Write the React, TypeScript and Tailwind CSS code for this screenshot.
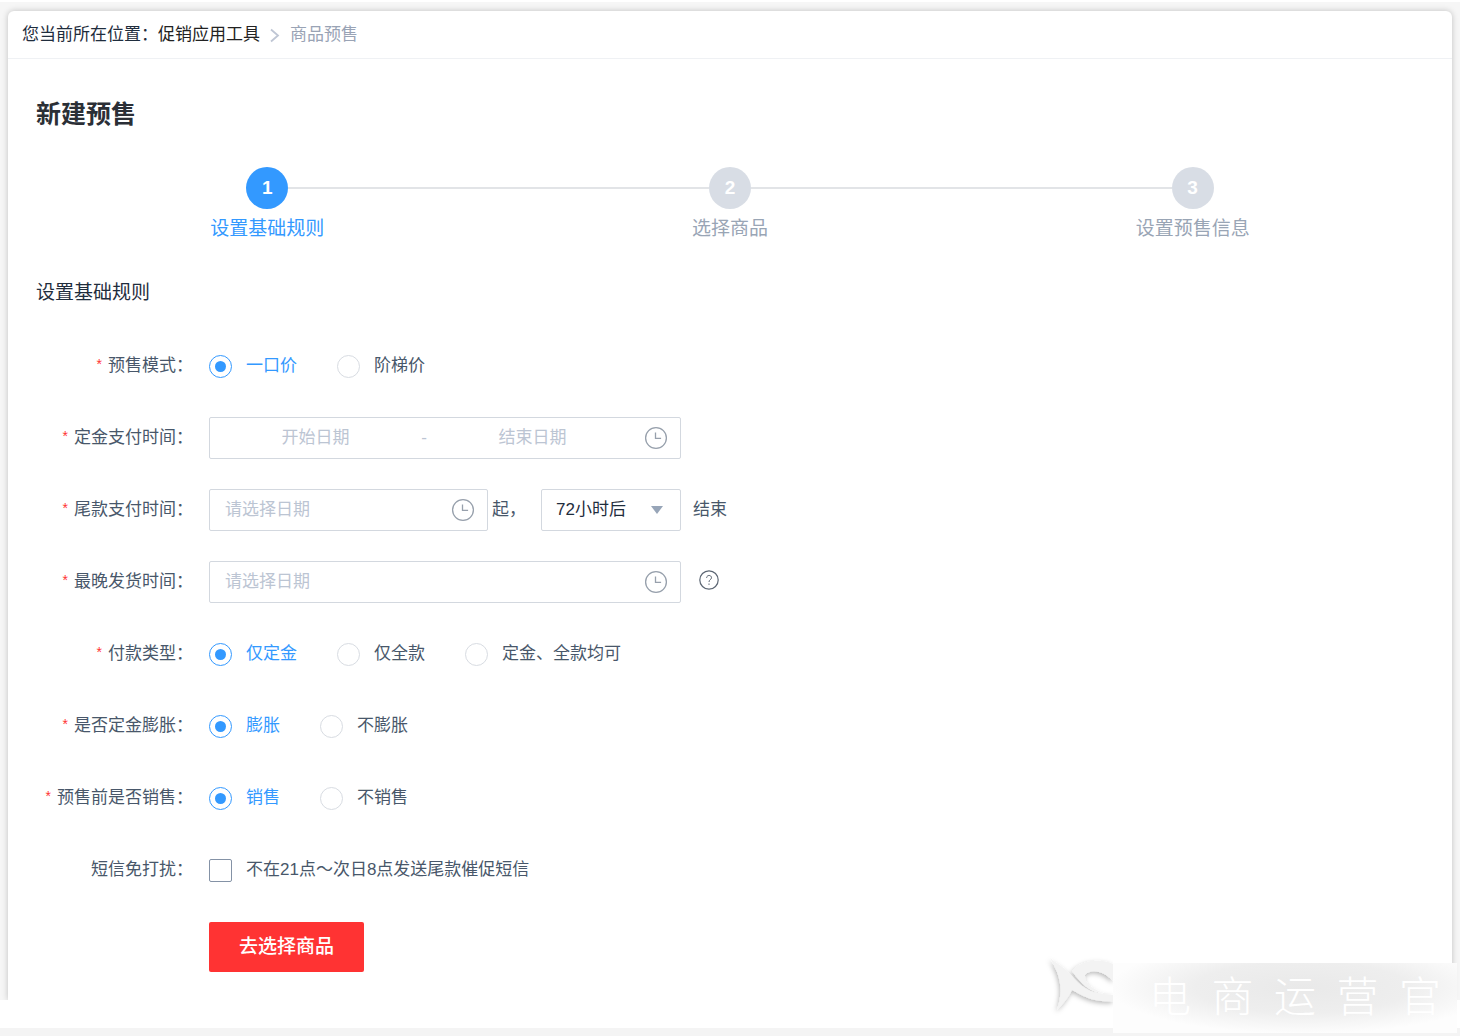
import type { ReactNode } from "react"

interface FormRowProps {
  label: string;
  required?: boolean;
  htmlFor?: string;
  children: ReactNode;
}

const FormRow = ({ label, required = true, htmlFor, children }: FormRowProps) => (
  <div className="flex min-h-[42px] items-center gap-4">
    <label htmlFor={htmlFor} className="flex w-[157px] shrink-0 items-start justify-end gap-1.5">
      {required && <span className="text-sm leading-5 text-[#ff3333]">*</span>}
      <span className="whitespace-nowrap">{label}：</span>
    </label>
    {children}
  </div>
)

interface RadioGroupProps {
  name: string;
  label: string;
  options: string[];
}

const RadioGroup = ({ name, label, options }: RadioGroupProps) => (
  <div role="radiogroup" aria-label={label} className="flex flex-wrap gap-10">
    {options.map((option, i) => (
      <label key={option} className="flex cursor-pointer items-center gap-3.5">
        <input
          type="radio"
          name={name}
          defaultChecked={i === 0}
          className="peer grid size-[23px] appearance-none place-content-center rounded-full border border-[#d8dce2] bg-white before:size-[11px] before:rounded-full checked:border-[#3399ff] checked:before:bg-[#3399ff]"
        />
        <span className="peer-checked:text-[#3399ff]">{option}</span>
      </label>
    ))}
  </div>
)

const ClockIcon = () => (
  <svg viewBox="0 0 24 24" className="size-6 shrink-0" fill="none" stroke="#97a0ac" strokeWidth="1.3">
    <circle cx="12" cy="12" r="10.4" />
    <path d="M11.5 6.5v5.8h5.6" />
  </svg>
)

interface DateFieldProps {
  id: string;
  className: string;
}

const DateField = ({ id, className }: DateFieldProps) => (
  <div className={`flex h-[42px] items-center rounded-xs border border-[#d3d8df] bg-white pr-3 pl-[15px] ${className}`}>
    <input
      id={id}
      type="text"
      placeholder="请选择日期"
      className="w-full min-w-0 flex-1 outline-none placeholder:text-[#bcc5d3]"
    />
    <ClockIcon />
  </div>
)

const steps = ["设置基础规则", "选择商品", "设置预售信息"]

const Steps = () => (
  <ol className="mt-[35px] grid grid-cols-3 text-[19px]">
    {steps.map((step, i) => (
      <li key={step} className="flex flex-col items-center">
        <div className="flex w-full items-center">
          <span className={`h-0.5 flex-1 ${i > 0 ? "bg-[#e2e4e7]" : ""}`} />
          <span
            className={`flex size-[42px] items-center justify-center rounded-full font-bold text-white ${i === 0 ? "bg-[#3399ff]" : "bg-[#d8dde5]"}`}
          >
            {i + 1}
          </span>
          <span className={`h-0.5 flex-1 ${i < steps.length - 1 ? "bg-[#e2e4e7]" : ""}`} />
        </div>
        <span className={`mt-1.5 leading-7 ${i === 0 ? "text-[#3399ff]" : "text-[#99a5b5]"}`}>{step}</span>
      </li>
    ))}
  </ol>
)

const Watermark = () => (
  <div className="pointer-events-none absolute right-[3px] bottom-[3px] flex items-end">
    <svg viewBox="0 0 80 84" className="h-[84px] w-20" fill="none">
      <defs>
        <filter id="soft" x="-20%" y="-20%" width="140%" height="140%">
          <feDropShadow dx="-1" dy="2" stdDeviation="2.5" floodColor="#000" floodOpacity="0.28" />
        </filter>
      </defs>
      <g filter="url(#soft)" fill="#f3f3f3">
        {/* tail and belly */}
        <path d="M17 9C24 15 31 18 38 26C47 37 56 44 70 45L80 46V52C62 54 50 47 39 41C35 49 30 55 24 61C30 43 29 29 17 9Z" />
        {/* back, curling round the eye */}
        <path d="M39 22C50 10 68 10 80 15V32C71 22 58 19 52 26C51 34 60 41 71 44C57 43 48 35 39 22Z" />
      </g>
    </svg>
    <div className="bg-[#fdfdfd]">
      <div className="flex h-[70px] w-[344px] items-center justify-between bg-[radial-gradient(ellipse_at_55%_35%,#e9e9e9_0%,#eeeeee_40%,#fdfdfd_72%)] pr-4 pl-9 text-[42px] leading-none font-light text-white">
        {Array.from("电商运营官").map((char) => (
          <span key={char}>{char}</span>
        ))}
      </div>
    </div>
  </div>
)

const App = () => {
  return (
    <div
      lang="zh-CN"
      className="relative flex min-h-screen flex-col bg-white pt-0.5 font-['Liberation_Sans','Noto_Sans_CJK_SC',sans-serif] text-[17px] leading-6 text-[#48576a]"
    >
      <div className="flex flex-1 flex-col overflow-hidden bg-[#f6f6f6] px-2 pt-[9px]">
        <main className="flex-1 rounded-t-md bg-white shadow-[0_0_6px_rgba(0,0,0,0.22)]">
          <nav className="flex h-12 items-center border-b border-[#eff1f4] px-3.5 text-[#1f2d3d]">
            <span>您当前所在位置：</span>
            <a href="#tools" className="text-[#222222]">促销应用工具</a>
            <svg viewBox="0 0 30 16" className="h-4 w-[30px]" fill="none" stroke="#bfc6d4" strokeWidth="1.8">
              <path d="M11 2.5l7 6-7 6" />
            </svg>
            <span className="text-[#99a3b5]">商品预售</span>
          </nav>

          <div className="px-7 pt-[37px] pb-7">
            <h1 className="text-[25px] leading-9 font-bold text-[#2b2f36]">新建预售</h1>
            <Steps />
            <h2 className="mt-9 text-[19px] leading-7 text-[#1f2d3d]">设置基础规则</h2>

            <form className="mt-[38px]" onSubmit={(e) => e.preventDefault()}>
              <div className="space-y-[30px]">
                <FormRow label="预售模式">
                  <RadioGroup name="mode" label="预售模式" options={["一口价", "阶梯价"]} />
                </FormRow>
                <FormRow label="定金支付时间" htmlFor="depositStart">
                  <div className="flex h-[42px] w-[472px] items-center rounded-xs border border-[#d3d8df] bg-white pr-3 text-[#bcc5d3]">
                    <input
                      id="depositStart"
                      type="text"
                      placeholder="开始日期"
                      className="w-full min-w-0 flex-1 text-center outline-none placeholder:text-[#bcc5d3]"
                    />
                    <span>-</span>
                    <input
                      type="text"
                      aria-label="结束日期"
                      placeholder="结束日期"
                      className="w-full min-w-0 flex-1 text-center outline-none placeholder:text-[#bcc5d3]"
                    />
                    <span className="ml-1.5"><ClockIcon /></span>
                  </div>
                </FormRow>
                <FormRow label="尾款支付时间" htmlFor="balanceStart">
                  <div className="flex items-center">
                    <DateField id="balanceStart" className="w-[279px]" />
                    <span className="w-[53px] pl-1">起，</span>
                    <div className="relative w-[140px]">
                      <select
                        aria-label="尾款支付结束时间"
                        className="h-[42px] w-full appearance-none rounded-xs border border-[#d3d8df] bg-white pl-3.5 text-[#1f2d3d]"
                      >
                        <option>72小时后</option>
                      </select>
                      <svg
                        viewBox="0 0 12 8"
                        className="pointer-events-none absolute top-[17px] right-[18px] h-2 w-3"
                        fill="#97a5b8"
                      >
                        <path d="M0 0h12L6 8z" />
                      </svg>
                    </div>
                    <span className="pl-3">结束</span>
                  </div>
                </FormRow>
                <FormRow label="最晚发货时间" htmlFor="shipDate">
                  <div className="flex items-center gap-[18px]">
                    <DateField id="shipDate" className="w-[472px]" />
                    <svg viewBox="0 0 20 20" className="mb-1 size-5" fill="none" stroke="#5c6673" strokeWidth="1.2">
                      <circle cx="10" cy="10" r="9.2" />
                      <path d="M7.6 7.9C7.6 4.6 12.6 4.7 12.5 7.8C12.4 9.7 10 9.6 10 12M10 13.5v1.4" strokeWidth="1" />
                    </svg>
                  </div>
                </FormRow>
                <FormRow label="付款类型">
                  <RadioGroup name="payType" label="付款类型" options={["仅定金", "仅全款", "定金、全款均可"]} />
                </FormRow>
                <FormRow label="是否定金膨胀">
                  <RadioGroup name="expand" label="是否定金膨胀" options={["膨胀", "不膨胀"]} />
                </FormRow>
                <FormRow label="预售前是否销售">
                  <RadioGroup name="sellBefore" label="预售前是否销售" options={["销售", "不销售"]} />
                </FormRow>
                <FormRow label="短信免打扰" required={false} htmlFor="quiet">
                  <label className="flex cursor-pointer items-center gap-3.5">
                    <input
                      id="quiet"
                      type="checkbox"
                      className="size-[23px] appearance-none rounded-xs border border-[#8492a6] bg-white checked:bg-[#3399ff]"
                    />
                    <span>不在21点～次日8点发送尾款催促短信</span>
                  </label>
                </FormRow>
              </div>
              <button
                type="submit"
                className="mt-[31px] ml-[173px] h-[50px] cursor-pointer rounded-xs bg-[#ff3333] px-[30px] text-[19px] font-medium text-white"
              >
                去选择商品
              </button>
            </form>
          </div>
        </main>
      </div>
      <div className="h-7 bg-white" />
      <div className="h-2 bg-[#f4f4f4]" />
      <Watermark />
    </div>
  )
}

export default App
